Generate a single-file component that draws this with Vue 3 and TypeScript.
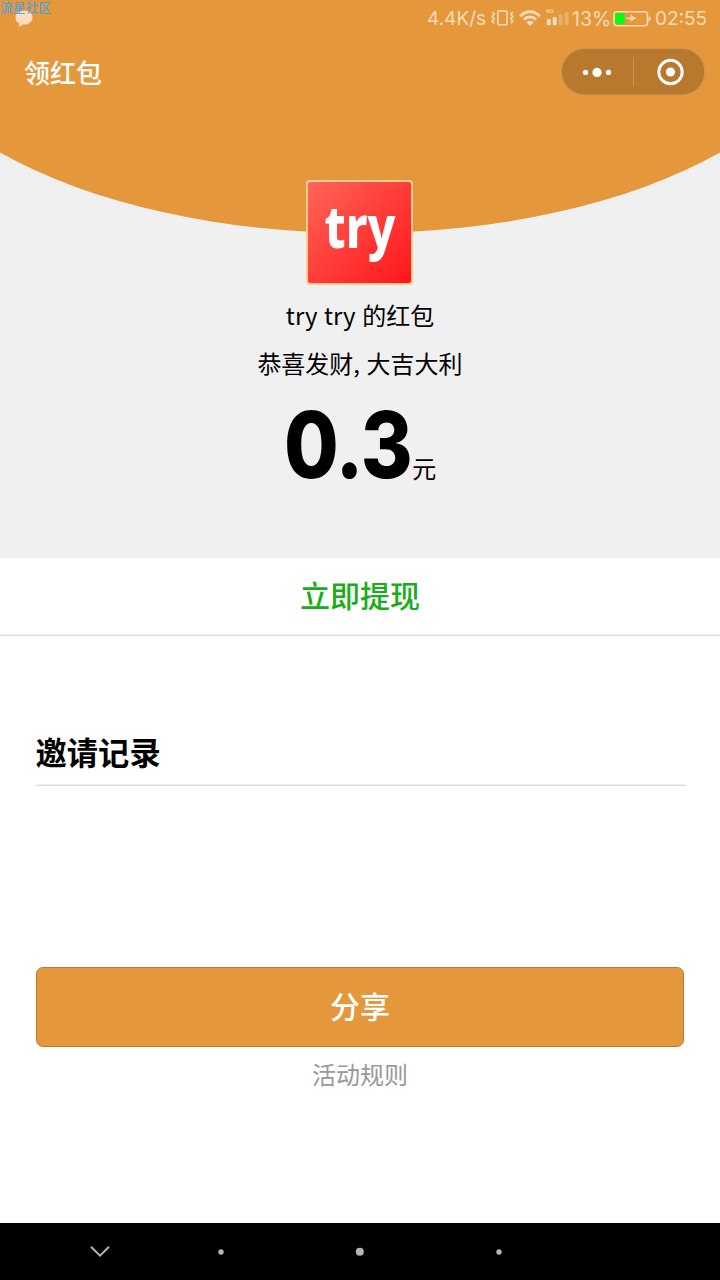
<script setup lang="ts">
const amount: string = '0.3'
const clock: string = '02:55'
</script>

<template>
  <div class="screen">
    <section class="hero">
      <svg class="arc" width="720" height="234" viewBox="0 0 720 234" aria-hidden="true">
        <path d="M0 0H720V152.6A480 238 0 0 1 0 152.6Z" fill="#e5973c" />
      </svg>
      <header class="status">
        <div class="notice">
          <svg width="20" height="18" viewBox="0 0 20 18">
            <path d="M9 0.5C14 0.5 17.5 3.5 17.5 7.4C17.5 11.4 14 14.6 9 14.6C8.7 14.6 8.2 14.6 7.9 14.5C6.8 15.7 5.4 16.4 3.3 16.5C4 15.6 4.2 14.6 4 13.2C1.8 12 .5 9.9 .5 7.4C.5 3.5 4 .5 9 .5Z" fill="#f9dfc0" />
          </svg>
          <span class="watermark">流星社区</span>
        </div>
        <span class="speed">4.4K/s</span>
        <svg class="glyphs" width="80" height="32" viewBox="0 0 80 32" fill="none" stroke="#f8dcb9">
          <rect x="8.8" y="11" width="9.2" height="13.8" rx="1" stroke-width="1.6" />
          <path d="M3.2 12l2 2-2 2.4 2 2.4-2 2.4 2 2M23.8 12l-2 2 2 2.4-2 2.4 2 2.4-2 2" stroke-width="1.6" />
          <path d="M31.2 16.4C36.9 10.2 45.2 10.2 50.8 16.4" stroke-width="2.8" />
          <path d="M34.9 19.6C38.4 16.1 43.6 16.1 47.1 19.6" stroke-width="2.8" />
          <path d="M37.3 22.2Q41 19.3 44.7 22.2L41 25.9Z" fill="#f8dcb9" stroke="none" />
          <g fill="#f8dcb9" stroke="none">
            <rect x="57.8" y="19" width="4" height="6.2" rx="1" />
            <rect x="63.7" y="17" width="4" height="8.2" rx="1" />
            <rect x="69.6" y="14.5" width="4" height="10.7" rx="1" opacity=".35" />
            <rect x="75.5" y="12" width="4" height="13.2" rx="1" opacity=".35" />
            <text x="56.8" y="13" font-size="6" font-weight="700" textLength="8" font-family="Liberation Sans, sans-serif">4G</text>
          </g>
        </svg>
        <span class="percent">13%</span>
        <svg class="battery" width="40" height="20" viewBox="0 0 40 20">
          <rect x="2" y="2.8" width="33.5" height="14" rx="3" fill="none" stroke="#f8dcb9" stroke-width="1.6" />
          <rect x="3" y="4.2" width="9.7" height="10.8" fill="#00ff11" />
          <path d="M12.6 9.4L18.9 8.2L18.5 5.2L22.4 8.4L25 8.4L19 12.4L18.6 10.4Z" fill="#f8dcb9" />
          <path d="M36.7 7.2Q38.8 7.8 38.8 9.8T36.7 12.4Z" fill="#f8dcb9" />
        </svg>
        <span class="clock">{{ clock }}</span>
      </header>

      <nav class="titlebar">
        <h1>领红包</h1>
        <div class="capsule">
          <svg width="144" height="48" viewBox="0 0 144 48">
            <rect x=".5" y=".5" width="143.4" height="46.5" rx="23.25" fill="#b8792f" stroke="#cf9453" />
            <g fill="#fff">
              <circle cx="24.5" cy="24.4" r="2.6" />
              <circle cx="36" cy="24.4" r="4.6" />
              <circle cx="47.5" cy="24.4" r="2.6" />
              <circle cx="109.5" cy="24" r="4.6" />
            </g>
            <circle cx="109.5" cy="24" r="11.7" fill="none" stroke="#fff" stroke-width="3" />
            <path d="M72.5 9V38" stroke="#cf9453" />
          </svg>
        </div>
      </nav>

      <div class="avatar">
        <svg width="103" height="101" viewBox="0 0 103 101">
          <text x="16.5" y="66" textLength="71" lengthAdjust="spacingAndGlyphs">try</text>
        </svg>
      </div>
      <p class="owner">try try 的红包</p>
      <p class="wish">恭喜发财, 大吉大利</p>
      <p class="amount"><strong>{{ amount }}</strong><span>元</span></p>
    </section>

    <button class="withdraw">立即提现</button>

    <section class="records">
      <h2>邀请记录</h2>
    </section>

    <button class="share">分享</button>
    <a class="rules">活动规则</a>

    <footer class="navkeys">
      <svg width="720" height="57" viewBox="0 0 720 57">
        <path d="M91 23.8L100 32.6L109 23.8" fill="none" stroke="#b5b5b5" stroke-width="1.9" />
        <g fill="#b5b5b5">
          <circle cx="221" cy="29" r="2.7" />
          <circle cx="359.8" cy="28.7" r="4" />
          <circle cx="499" cy="29" r="2.7" />
        </g>
      </svg>
    </footer>
  </div>
</template>

<style>
body {
  margin: 0;
  background: #fff;
}
</style>

<style scoped>
.screen {
  width: 720px;
  height: 1280px;
  display: flex;
  flex-direction: column;
  align-items: center;
  overflow: hidden;
  background: #fff;
  color: #000;
  font-family: "Noto Sans CJK SC", sans-serif;
}
svg {
  display: block;
  flex: none;
}
p, h1, h2 {
  margin: 0;
}
button {
  box-sizing: border-box;
  padding: 0 0 5px;
  border: 0;
  font-family: inherit;
  font-weight: 500;
}
.hero {
  position: relative;
  isolation: isolate;
  width: 720px;
  height: 558px;
  flex: none;
  display: flex;
  flex-direction: column;
  align-items: center;
  background: #f0f0f0;
}
.arc {
  position: absolute;
  z-index: -1;
  top: 0;
  left: 0;
}
.status {
  width: 720px;
  height: 38px;
  display: flex;
  align-items: center;
  color: #f8dcb9;
  font-family: Inter, sans-serif;
  font-size: 19px;
  line-height: 40px;
  white-space: nowrap;
}
.notice {
  position: relative;
  width: 427px;
  height: 38px;
  box-sizing: border-box;
  padding: 10px 0 0 15px;
}
.watermark {
  position: absolute;
  top: 0;
  left: 0;
  color: #3da2ed;
  font-family: "Noto Sans CJK SC", sans-serif;
  font-size: 12.8px;
  line-height: 13px;
}
.speed {
  width: 62px;
}
.glyphs {
  margin-top: -6px;
}
.percent {
  width: 43px;
  padding-left: 3px;
  box-sizing: border-box;
  font-size: 19.6px;
}
.battery {
  margin: 0 3px 0 0;
}
.titlebar {
  width: 720px;
  height: 68px;
  box-sizing: border-box;
  padding: 10px 15px 0 24px;
  display: flex;
  justify-content: space-between;
}
h1 {
  color: #fff;
  font-size: 26px;
  line-height: 47px;
  font-weight: 500;
}
.avatar {
  margin: 74px 1px 0 0;
  width: 107px;
  height: 105px;
  box-sizing: border-box;
  border: 2px solid #fcce98;
  border-radius: 4px;
  background: linear-gradient(135deg, #ff6558, #ff1519);
}
.avatar text {
  fill: #fff;
  font-family: "Noto Sans", sans-serif;
  font-size: 58px;
  font-weight: 800;
}
.owner {
  margin-top: 12px;
  font-size: 24px;
  line-height: 36px;
  word-spacing: 1.2px;
}
.wish {
  margin-top: 12px;
  font-size: 24px;
  line-height: 36px;
  word-spacing: 1.2px;
}
.amount {
  margin-top: 8px;
  height: 112px;
  display: flex;
  align-items: baseline;
  line-height: 112px;
}
.amount strong {
  margin-right: -20px;
  transform: scaleX(.86);
  transform-origin: 0 50%;
  font-family: Inter, sans-serif;
  font-size: 92px;
  font-weight: 800;
  letter-spacing: -1px;
}
.amount span {
  font-size: 24px;
}
.withdraw {
  width: 720px;
  height: 78px;
  flex: none;
  border-bottom: 1px solid #dadada;
  box-shadow: inset 0 -1px #f0f0f0;
  background: #fff;
  color: #1aad19;
  font-size: 30px;
}
.records {
  width: 650px;
  height: 331px;
  flex: none;
  margin-left: 1px;
}
h2 {
  margin-top: 92px;
  height: 57px;
  border-bottom: 1px solid #dadada;
  box-shadow: inset 0 -1px #f0f0f0;
  font-size: 31.3px;
  line-height: 48px;
  font-weight: 700;
}
.share {
  width: 648px;
  height: 80px;
  flex: none;
  border: 1px solid #c37b28;
  border-radius: 7px;
  background: #e5973c;
  color: #fff;
  font-size: 30px;
}
.rules {
  margin-top: 9px;
  color: #999;
  font-size: 24px;
  line-height: 36px;
}
.navkeys {
  margin-top: auto;
  width: 720px;
  height: 57px;
  flex: none;
  background: #000;
}
</style>
